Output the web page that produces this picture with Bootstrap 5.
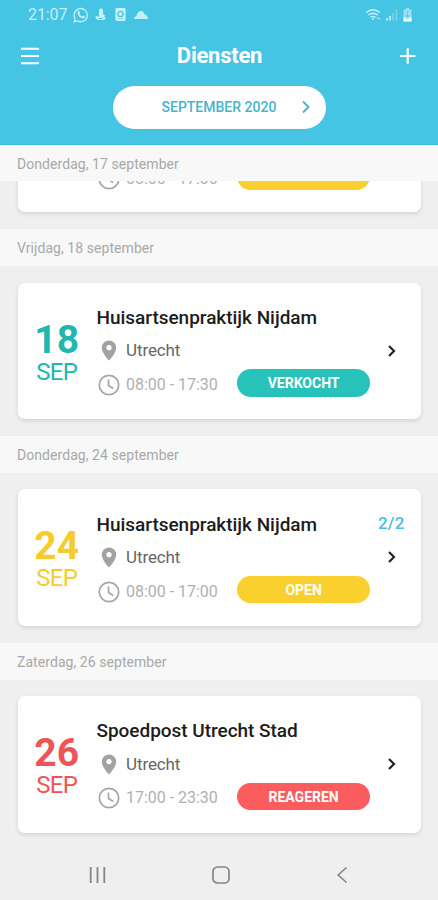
<!DOCTYPE html>
<html lang="nl">
<head>
<meta charset="utf-8">
<meta name="viewport" content="width=device-width, initial-scale=1">
<title>Diensten</title>
<link href="https://cdn.jsdelivr.net/npm/bootstrap@5.3.0/dist/css/bootstrap.min.css" rel="stylesheet">
<style>
body{font-family:Roboto,"Liberation Sans",sans-serif;background:#efefef;height:900px;overflow:hidden}
svg{display:block;flex:none}
.app-head{background:#46c4e4;height:145px;border-bottom:1px solid #3bbcd8}
.status{height:29px;padding-left:28px;padding-right:25px;color:#c5eff9}
.clock{font-size:16px;line-height:29px;width:45px;letter-spacing:-.1px}
.title-row{height:54px;padding:0 22px 0 21px}
.title-row h1{font-size:22px;font-weight:700;line-height:56px;letter-spacing:-.25px}
.month{width:213px;height:43px;margin:2.5px 0 0 113px;color:#49b3cb;font-size:14px;font-weight:500;padding:0 15px 0 48.5px}
.day-bar{height:37px;background:#f8f8f8;color:#a8a8a8;font-size:14px;line-height:38px;padding-left:17px;letter-spacing:.06px}
.day-bar.first{height:36px}
.clip{height:48px;overflow:hidden;padding-bottom:17.5px}
.clip .info{padding-top:23.5px}
.slot{padding:16.5px 0 16.75px}
.shift{width:403.5px;height:136.5px;margin-left:17.5px;border:0;border-radius:7px;box-shadow:0 2px 4px rgba(0,0,0,.11);background:#fff;flex:none}
.date{width:78.5px;padding-top:36px}
.date b{font-size:39px;line-height:42px;font-weight:700}
.date span{font-size:24px;line-height:22px;letter-spacing:-.6px}
.info{width:274px;padding-top:22.25px}
.info h2{font-size:19px;font-weight:500;line-height:26px;color:#1c1c1c;white-space:nowrap;padding-left:.5px;letter-spacing:-.03px}
.place{height:40px;font-size:17px;color:#666;letter-spacing:-.1px}
.when{height:28px;font-size:16px;color:#b0b0b0}
.ico{width:30px;padding-left:2px}
.hours{width:111.5px;white-space:nowrap;letter-spacing:-.02px}
.pill{width:133px;height:27.5px;color:#fff;font-size:14px;font-weight:700;line-height:28px;margin-top:-4px}
.side{width:51px;padding-top:23px}
.count{height:20px;font-size:17px;font-weight:500;line-height:22px;color:#4bbcdc;margin-left:8px;letter-spacing:.2px}
.side svg{margin:18px 0 0 17px}
.teal{color:#1eb8b0}.yellow{color:#f7cb2d}.red{color:#ee5558}
.bg-teal{background:#27c3ba}.bg-yellow{background:#fad02f}.bg-red{background:#fb5c5e}
.sysnav{padding:17px 90px 0 88px;color:#858585}
</style>
<script src="https://cdn.jsdelivr.net/npm/bootstrap@5.3.0/dist/js/bootstrap.bundle.min.js"></script>
</head>
<body>
<svg width="0" height="0" class="position-absolute">
<symbol id="pin" viewBox="0 0 16 21"><path fill="#a2a2a2" fill-rule="evenodd" d="M8 .5A7.2 7.2 0 0 0 .8 7.700C.8 13 8 20.500 8 20.500S15.200 13 15.200 7.700A7.200 7.200 0 0 0 8 .5zm0 4.600a2.600 2.600 0 1 1 0 5.200a2.600 2.600 0 0 1 0-5.200z"/></symbol>
<symbol id="time" viewBox="0 0 22 22"><g fill="none" stroke="#a6a6a6" stroke-width="1.700"><circle cx="11" cy="11" r="9.700"/><path d="M10.500 5.500v6l4.700 3"/></g></symbol>
<symbol id="next" viewBox="0 0 10 14"><path d="M2 2l5 5-5 5" fill="none" stroke="currentColor" stroke-width="2.200"/></symbol>
</svg>

<header class="app-head">
  <div class="status d-flex align-items-center">
    <span class="clock">21:07</span>
    <svg width="16" height="16" viewBox="0 0 17 17"><path d="M1.200 15.800l1-3.600a7 7 0 1 1 2.700 2.600z" fill="none" stroke="currentColor" stroke-width="1.400"/><path d="M5.300 4.500l1.300-.2 1 2.200-.8 1c.7 1.300 1.500 2 2.700 2.600l1-1 2.100 1-.2 1.300c-1 1.200-2.800.8-4.500-.3C6 9.700 4 7 5.300 4.500z" fill="currentColor"/></svg>
    <svg width="13" height="15" viewBox="0 0 13 15" style="margin-left:5px"><path d="M7 1.500a2 2 0 0 1 2 2V7l2 1.500-.6 1.300L12 11l-2 2H3.500L1 10l2-1 2 1V3.500a2 2 0 0 1 2-2z" fill="currentColor"/><path d="M4.500 11.500h4" stroke="#46c4e4"/></svg>
    <svg width="11" height="13" viewBox="0 0 11 14" style="margin-left:8px"><rect width="11" height="14" rx="1.500" fill="currentColor"/><circle cx="5.500" cy="6.500" r="2.800" fill="none" stroke="#46c4e4" stroke-width="1.400"/><path d="M3 11.500h5" stroke="#46c4e4" stroke-width=".6"/></svg>
    <svg width="14" height="10" viewBox="0 0 14 10" style="margin-left:8px"><path d="M0 9c0-2 1.500-2.700 2.500-2.700C3 3 4.500 1 7 1c2 0 3 1.500 3.300 3.300C12.500 4.500 14 6.500 14 9z" fill="currentColor"/></svg>
    <svg class="ms-auto" width="18" height="14" viewBox="0 0 18 14"><path d="M1 4.500q7-5.500 14 0M3.300 7q4.700-3.500 9.400 0M5.500 9.300q2.500-1.800 5 0" fill="none" stroke="currentColor" stroke-width="1.500"/><path d="M6.500 10.500h3L8 12.500zM11 9l2 2.500 1-2 2 2" fill="currentColor"/></svg>
    <svg width="12" height="13" viewBox="0 0 12 13" style="margin-left:3px"><path d="M1 12.500V10M4 12.500V8" stroke="currentColor" stroke-width="1.700"/><path d="M7 12.500V5M10.500 12.500V1.500" stroke="currentColor" stroke-width="1.500" opacity=".45"/></svg>
    <svg width="9" height="14" viewBox="0 0 9 14" style="margin:0 1px 0 5px"><path d="M3 0h3v1.500h2.500v12h-8v-12H3z" fill="currentColor" opacity=".65"/><path d="M.5 9l4 2.500 4-2.500v4.500h-8z" fill="#eefcff"/><path d="M4.500 3v6M2.500 7l2 2 2-2" fill="none" stroke="#46c4e4" stroke-width=".8"/></svg>
  </div>
  <div class="title-row d-flex align-items-center justify-content-between text-white">
    <svg width="18" height="20" viewBox="0 0 18 20"><path d="M0 2.700h18M0 10h18M0 17.300h18" stroke="currentColor" stroke-width="2"/></svg>
    <h1 class="m-0">Diensten</h1>
    <svg width="16" height="16" viewBox="0 0 16 16"><path d="M0 8h15.500M7.700 .2v15.500" stroke="currentColor" stroke-width="2.200"/></svg>
  </div>
  <div class="month bg-white rounded-pill d-flex align-items-center justify-content-between">
    <span>SEPTEMBER 2020</span>
    <svg width="10" height="14" viewBox="0 0 10 14"><path d="M2 1.500L7.500 7 2 12.500" fill="none" stroke="currentColor" stroke-width="1.900"/></svg>
  </div>
</header>

<main>
  <div class="day-bar first">Donderdag, 17 september</div>
  <div class="clip d-flex flex-column justify-content-end">
    <article class="shift d-flex">
      <div class="date"></div>
      <div class="info">
        <h2 class="m-0">&nbsp;</h2>
        <div class="place"></div>
        <div class="when d-flex align-items-center"><span class="ico"><svg width="22" height="22"><use href="#time"/></svg></span><span class="hours">08:00 - 17:30</span><span class="pill rounded-pill bg-yellow"></span></div>
      </div>
    </article>
  </div>

  <div class="day-bar">Vrijdag, 18 september</div>
  <div class="slot">
    <article class="shift d-flex">
      <div class="date teal d-flex flex-column align-items-center"><b>18</b><span>SEP</span></div>
      <div class="info">
        <h2 class="m-0">Huisartsenpraktijk Nijdam</h2>
        <div class="place d-flex align-items-center"><span class="ico"><svg width="22" height="21"><use href="#pin"/></svg></span>Utrecht</div>
        <div class="when d-flex align-items-center"><span class="ico"><svg width="22" height="22"><use href="#time"/></svg></span><span class="hours">08:00 - 17:30</span><span class="pill rounded-pill bg-teal text-center">VERKOCHT</span></div>
      </div>
      <div class="side text-dark"><div class="count"></div><svg width="10" height="14"><use href="#next"/></svg></div>
    </article>
  </div>

  <div class="day-bar">Donderdag, 24 september</div>
  <div class="slot">
    <article class="shift d-flex">
      <div class="date yellow d-flex flex-column align-items-center"><b>24</b><span>SEP</span></div>
      <div class="info">
        <h2 class="m-0">Huisartsenpraktijk Nijdam</h2>
        <div class="place d-flex align-items-center"><span class="ico"><svg width="22" height="21"><use href="#pin"/></svg></span>Utrecht</div>
        <div class="when d-flex align-items-center"><span class="ico"><svg width="22" height="22"><use href="#time"/></svg></span><span class="hours">08:00 - 17:00</span><span class="pill rounded-pill bg-yellow text-center">OPEN</span></div>
      </div>
      <div class="side text-dark"><div class="count">2/2</div><svg width="10" height="14"><use href="#next"/></svg></div>
    </article>
  </div>

  <div class="day-bar">Zaterdag, 26 september</div>
  <div class="slot">
    <article class="shift d-flex">
      <div class="date red d-flex flex-column align-items-center"><b>26</b><span>SEP</span></div>
      <div class="info">
        <h2 class="m-0">Spoedpost Utrecht Stad</h2>
        <div class="place d-flex align-items-center"><span class="ico"><svg width="22" height="21"><use href="#pin"/></svg></span>Utrecht</div>
        <div class="when d-flex align-items-center"><span class="ico"><svg width="22" height="22"><use href="#time"/></svg></span><span class="hours">17:00 - 23:30</span><span class="pill rounded-pill bg-red text-center">REAGEREN</span></div>
      </div>
      <div class="side text-dark"><div class="count"></div><svg width="10" height="14"><use href="#next"/></svg></div>
    </article>
  </div>
</main>

<nav class="sysnav d-flex justify-content-between align-items-center">
  <svg width="18" height="18" viewBox="0 0 18 18"><path d="M2.700 1v16M9.500 1v16M16.300 1v16" stroke="currentColor" stroke-width="1.800"/></svg>
  <svg width="18" height="18" viewBox="0 0 18 18"><rect x="1" y="1" width="16" height="16" rx="4.500" fill="none" stroke="currentColor" stroke-width="1.700"/></svg>
  <svg width="12" height="18" viewBox="0 0 12 18"><path d="M10.500 1.500L2.200 9l8.300 7.500" fill="none" stroke="currentColor" stroke-width="1.600"/></svg>
</nav>
</body>
</html>
